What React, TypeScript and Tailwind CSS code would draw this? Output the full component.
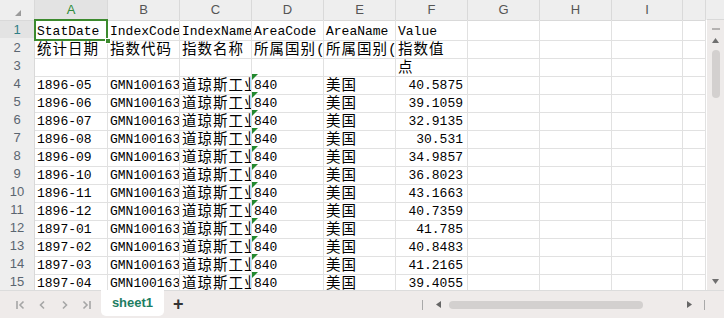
import React from "react";

const cols = ["A", "B", "C", "D", "E", "F", "G", "H", "I", ""];

const data: [string, string][] = [
  ["1896-05", "40.5875"],
  ["1896-06", "39.1059"],
  ["1896-07", "32.9135"],
  ["1896-08", "30.531"],
  ["1896-09", "34.9857"],
  ["1896-10", "36.8023"],
  ["1896-11", "43.1663"],
  ["1896-12", "40.7359"],
  ["1897-01", "41.785"],
  ["1897-02", "40.8483"],
  ["1897-03", "41.2165"],
  ["1897-04", "39.4055"],
];

type Cell = { text?: string; right?: boolean; flag?: boolean; selected?: boolean };

const rows: Cell[][] = [
  [
    { text: "StatDate", selected: true },
    { text: "IndexCode" },
    { text: "IndexName" },
    { text: "AreaCode" },
    { text: "AreaName" },
    { text: "Value" },
  ],
  [
    { text: "统计日期" },
    { text: "指数代码" },
    { text: "指数名称" },
    { text: "所属国别(" },
    { text: "所属国别(" },
    { text: "指数值" },
  ],
  [{}, {}, {}, {}, {}, { text: "点" }],
  ...data.map(([d, v]) => [
    { text: d },
    { text: "GMN100163" },
    { text: "道琼斯工业" },
    { text: "840", flag: true },
    { text: "美国" },
    { text: v, right: true },
  ]),
];

const cjk = /[\u4e00-\u9fff(]/;

function CellText({ text }: { text: string }) {
  const parts = text.split(/([\u4e00-\u9fff(]+)/).filter(Boolean);
  return (
    <>
      {parts.map((p, i) =>
        cjk.test(p) ? (
          <span key={i} className="text-[14.5px] tracking-[1px]">{p}</span>
        ) : (
          <span key={i}>{p}</span>
        )
      )}
    </>
  );
}

const grid = "grid grid-cols-[35px_73px_72px_72px_72px_72px_72px_72px_72px_71px_23px]";

export default function App() {
  return (
    <div className="w-[724px] h-[318px] overflow-hidden bg-white flex flex-col select-none">
      {/* column headers */}
      <div className="flex h-[20px] bg-[#eeeeee]">
        <div className={`${grid} w-[707px]`}>
          <div className="relative border-r border-b border-[#d9d9d9]">
            <svg className="absolute left-[15px] top-[10px]" width="6" height="6" viewBox="0 0 6 6">
              <polygon points="6,0 6,6 0,6" fill="#9a9a9a" />
            </svg>
          </div>
          {cols.map((c, i) => (
            <div
              key={i}
              className={`flex items-center justify-center border-r border-b border-[#d9d9d9] text-[13px] font-['Liberation_Sans',sans-serif] ${
                i === 0 ? "bg-[#e3e3e3] text-[#2e8b3a]" : "text-[#555]"
              }`}
            >
              {c}
            </div>
          ))}
        </div>
        <div className="flex-1 border-b border-[#d9d9d9]" />
      </div>

      <div className="flex h-[270px]">
        <div className="w-[707px] flex flex-col">
          {rows.map((r, ri) => (
            <div key={ri} className={`${grid} h-[18px]`}>
              <div
                className={`flex items-center justify-center border-r border-b border-[#d9d9d9] text-[13px] font-['Liberation_Sans',sans-serif] ${
                  ri === 0 ? "bg-[#e3e3e3] text-[#2f7f86]" : "bg-[#eeeeee] text-[#5a6570]"
                }`}
              >
                {ri + 1}
              </div>
              {Array.from({ length: 10 }).map((_, ci) => {
                const cell = r[ci] ?? {};
                return (
                  <div key={ci} className={`relative ${cell.selected ? "z-10" : ""}`}>
                    <div
                      className={`h-full flex items-end overflow-hidden whitespace-nowrap border-r border-b border-[#e1e1e1] text-[13px] leading-[16px] text-black font-['Liberation_Mono','Noto_Sans_CJK_SC',monospace] ${
                        cell.right ? "justify-end pr-[4px]" : "pl-[2px]"
                      }`}
                    >
                      {cell.text && <CellText text={cell.text} />}
                    </div>
                    {cell.flag && (
                      <svg className="absolute left-0 top-0" width="6" height="6" viewBox="0 0 6 6">
                        <polygon points="0,0 6,0 0,6" fill="#22892e" />
                      </svg>
                    )}
                    {cell.selected && (
                      <>
                        <div className="absolute inset-0 -top-px -left-px border-2 border-[#3c8a2e] pointer-events-none" />
                        <div className="absolute -right-[3px] -bottom-[3px] w-[6px] h-[6px] bg-[#3c8a2e] border border-white" />
                      </>
                    )}
                  </div>
                );
              })}
            </div>
          ))}
        </div>

        {/* vertical scrollbar */}
        <div className="flex-1 bg-[#eeebea] flex flex-col items-center pt-[8px] pb-[6px]">
          <div className="w-[8px] h-[2px] bg-[#b5b2b1]" />
          <svg className="mt-[8px]" width="7" height="5" viewBox="0 0 7 5">
            <polygon points="3.5,0 7,5 0,5" fill="#6f6f6f" />
          </svg>
          <div className="mt-[7px] w-[8px] h-[48px] rounded-full bg-[#d3d0cf]" />
          <div className="flex-1" />
          <svg width="7" height="5" viewBox="0 0 7 5">
            <polygon points="0,0 7,0 3.5,5" fill="#6f6f6f" />
          </svg>
        </div>
      </div>

      {/* bottom bar */}
      <div className="relative flex h-[28px] bg-[#efebea] border-t border-[#dcdcdc]">
        <div className="flex items-center gap-[13px] pl-[16px] text-[#a6a6a6]">
          <svg width="9" height="10" viewBox="0 0 9 10" fill="none" stroke="currentColor" strokeWidth="1.6">
            <path d="M1 1v8M7.5 1.5 4 5l3.5 3.5" />
          </svg>
          <svg width="9" height="10" viewBox="0 0 9 10" fill="none" stroke="currentColor" strokeWidth="1.6">
            <path d="M6 1.5 2.5 5 6 8.5" />
          </svg>
          <svg width="9" height="10" viewBox="0 0 9 10" fill="none" stroke="currentColor" strokeWidth="1.6">
            <path d="M3 1.5 6.5 5 3 8.5" />
          </svg>
          <svg width="9" height="10" viewBox="0 0 9 10" fill="none" stroke="currentColor" strokeWidth="1.6">
            <path d="M1.5 1.5 5 5 1.5 8.5M8 1v8" />
          </svg>
        </div>
        <div className="ml-[10px] -mt-px w-[63px] h-[26px] bg-white rounded-b-[5px] flex items-center justify-center text-[13px] font-bold text-[#1d7d62] font-['Liberation_Sans',sans-serif]">
          sheet1
        </div>
        <div className="ml-[9px] flex items-center text-[18px] font-bold text-[#333] font-['Liberation_Sans',sans-serif]">
          +
        </div>
        <div className="flex-1" />
        <div className="flex items-center pr-[19px]">
          <div className="w-px h-[10px] bg-[#a9a9a9]" />
          <svg className="ml-[13px]" width="5" height="7" viewBox="0 0 5 7">
            <polygon points="5,0 5,7 0,3.5" fill="#666" />
          </svg>
          <div className="ml-[8px] w-[194px] h-[8px] rounded-full bg-[#d3d0cf]" />
          <svg className="ml-[44px]" width="5" height="7" viewBox="0 0 5 7">
            <polygon points="0,0 5,3.5 0,7" fill="#666" />
          </svg>
          <div className="ml-[12px] w-px h-[10px] bg-[#a9a9a9]" />
        </div>
      </div>
    </div>
  );
}
